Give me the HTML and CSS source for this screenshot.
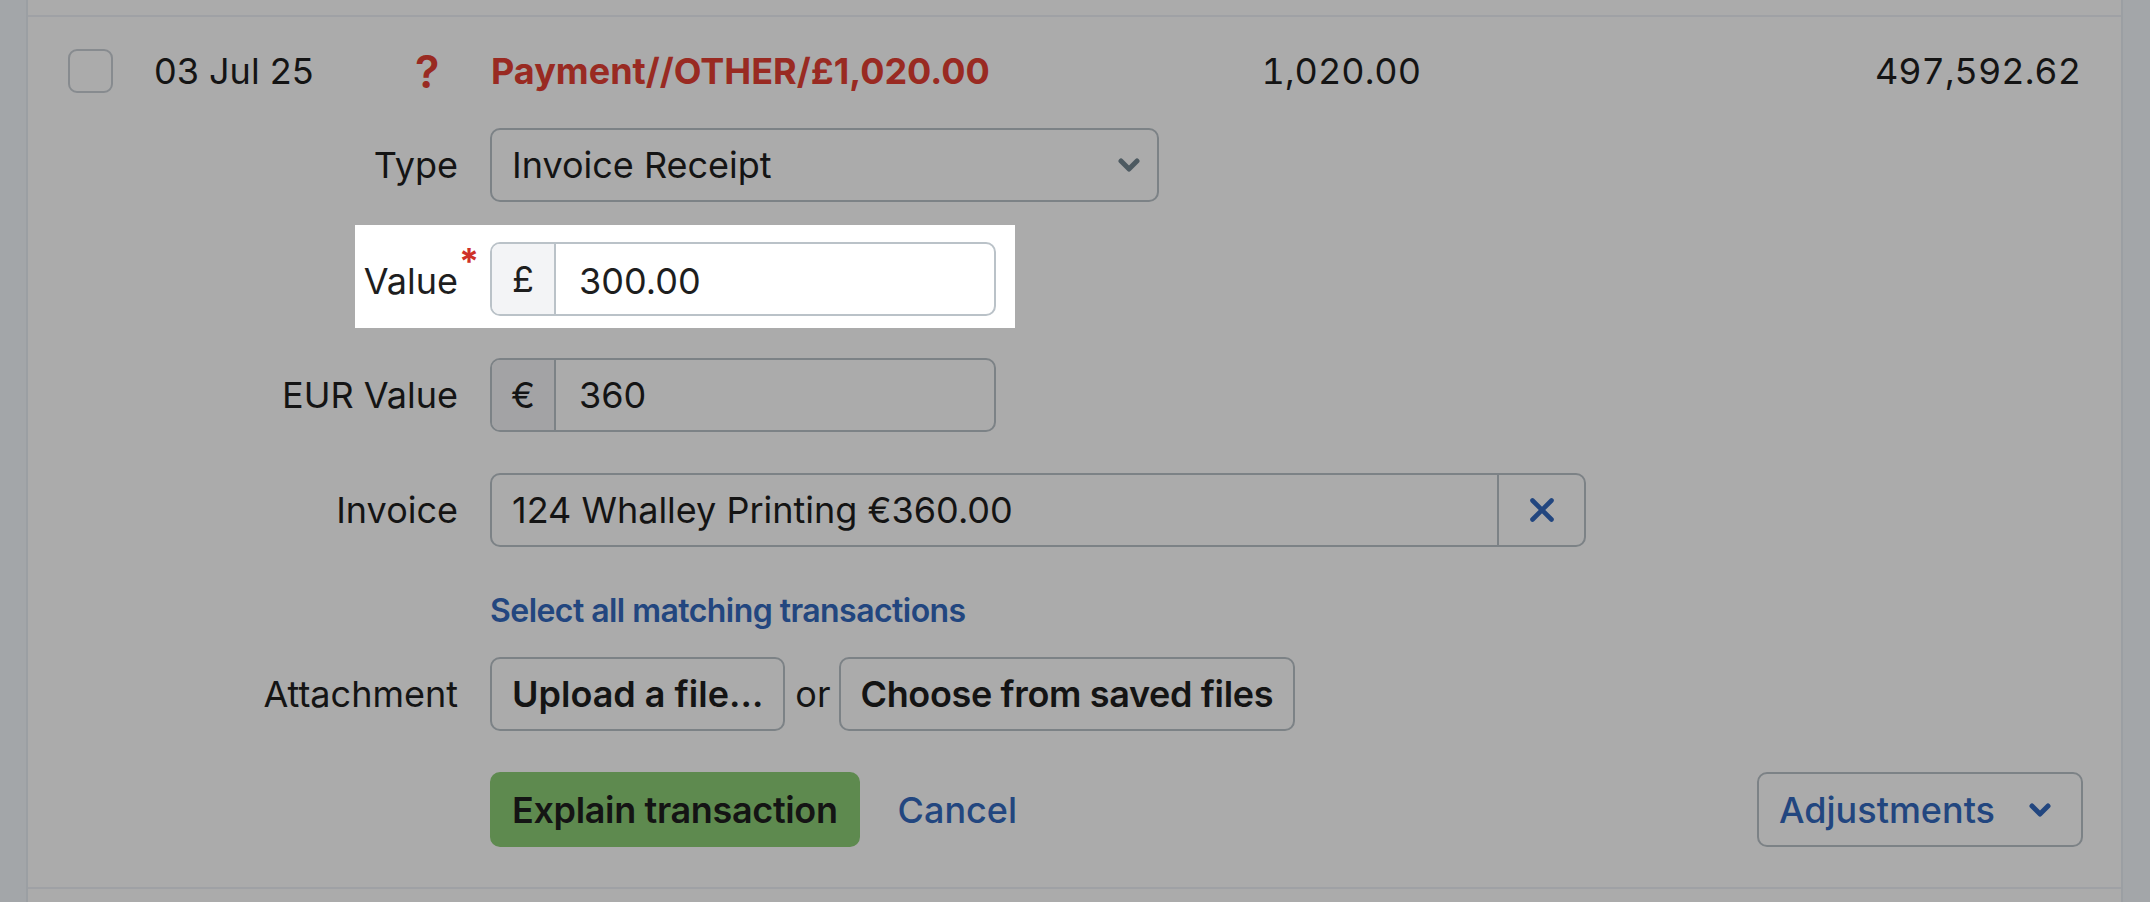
FILE: index.html
```html
<!DOCTYPE html>
<html lang="en">
<head>
<meta charset="utf-8">
<title>Explain transaction</title>
<link rel="stylesheet" href="styles.css">
</head>
<body>
<div class="card">
  <div class="row-stub"></div>
  <div class="txn">
    <div class="txn-head">
      <div class="cell"><span class="checkbox"></span></div>
      <div class="cell date">03 Jul 25</div>
      <div class="cell unknown">?</div>
      <div class="cell desc">Payment//OTHER/£1,020.00</div>
      <div class="cell num">1,020.00</div>
      <div class="cell num">497,592.62</div>
    </div>

    <div class="explain">
      <div class="frow first">
        <label class="flabel">Type</label>
        <div class="select">
          <span>Invoice Receipt</span>
          <svg class="chev" viewBox="0 0 22 14" width="22" height="14"><path d="M3 3l8 8 8-8" fill="none" stroke-width="5" stroke-linecap="round" stroke-linejoin="round"/></svg>
        </div>
      </div>

      <div class="frow spot r-value">
        <label class="flabel"><span class="req-wrap">Value<span class="req">*</span></span></label>
        <div class="igroup">
          <span class="addon">£</span>
          <span class="ival">300.00</span>
        </div>
      </div>

      <div class="frow r-eur">
        <label class="flabel">EUR Value</label>
        <div class="igroup">
          <span class="addon">€</span>
          <span class="ival">360</span>
        </div>
      </div>

      <div class="frow r-inv">
        <label class="flabel">Invoice</label>
        <div class="igroup wide">
          <span class="ival grow">124 Whalley Printing €360.00</span>
          <span class="clear">
            <svg viewBox="0 0 26 26" width="26" height="26"><path d="M3.5 3.5l19 19M22.5 3.5l-19 19" fill="none" stroke-width="4.6" stroke-linecap="round"/></svg>
          </span>
        </div>
      </div>

      <div class="frow r-link">
        <span class="flabel"></span>
        <a class="link">Select all matching transactions</a>
      </div>

      <div class="frow r-attach">
        <label class="flabel">Attachment</label>
        <div class="attach">
          <span class="btn upload">Upload a file…</span>
          <span class="or">or</span>
          <span class="btn">Choose from saved files</span>
        </div>
      </div>

      <div class="frow r-actions">
        <span class="flabel"></span>
        <div class="actions">
          <span class="btn primary">Explain transaction</span>
          <a class="cancel">Cancel</a>
          <span class="btn adjust">Adjustments
            <svg class="chev blue" viewBox="0 0 22 14" width="22" height="14"><path d="M3 3l8 8 8-8" fill="none" stroke-width="5" stroke-linecap="round" stroke-linejoin="round"/></svg>
          </span>
        </div>
      </div>
    </div>
  </div>
  <div class="row-stub"></div>
</div>
</body>
</html>
```

FILE: styles.css
```css
html, body {
  margin: 0;
  padding: 0;
  height: 902px;
  overflow: hidden;
}

body {
  background: #f4f8fd;
  font-family: Inter, "Noto Sans", sans-serif;
  font-size: 36px;
  color: #1e1e1e;
}

.card {
  margin: 0 27px 0 26px;
  background: #ffffff;
  border-left: 2px solid #e8eef4;
  border-right: 2px solid #e8eef4;
}

.row-stub {
  height: 15px;
}

.row-stub:last-child {
  height: 13px;
}

.txn {
  border-top: 2px solid #edf1f6;
  border-bottom: 2px solid #edf1f6;
  padding-bottom: 40px;
}

.txn-head {
  display: grid;
  grid-template-columns: 86px 261px 76px 1fr 200px 660px;
  align-items: center;
  padding: 31px 40px 0 40px;
  height: 44px;
}

.cell {
  white-space: nowrap;
}

.checkbox {
  display: block;
  width: 41px;
  height: 40px;
  border: 2px solid #cad0d6;
  border-radius: 9px;
  background: #fff;
}

.unknown {
  color: #e53f33;
  font-size: 45px;
  font-weight: 600;
  line-height: 44px;
  margin-top: 2px;
}

.desc {
  color: #e53f33;
  font-weight: 700;
}

.num {
  text-align: right;
  font-variant-numeric: tabular-nums;
}

.explain {
  display: flex;
  flex-direction: column;
  margin-top: 36px;
}

.frow {
  display: flex;
  align-items: center;
  gap: 32px;
  height: 74px;
}

.r-value { margin-top: 40px; }
.r-eur { margin-top: 42px; }
.r-inv { margin-top: 41px; }
.r-link { margin-top: 34px; height: 60px; }
.r-attach { margin-top: 16px; }
.r-actions { margin-top: 41px; height: 75px; }

.flabel {
  flex: 0 0 430px;
  text-align: right;
  white-space: nowrap;
}

.spot {
  position: relative;
}

.spot::after {
  content: "";
  position: absolute;
  left: 327px;
  top: -17px;
  width: 660px;
  height: 103px;
  box-shadow: 0 0 0 4000px rgba(0, 0, 0, 0.33);
  pointer-events: none;
  z-index: 10;
}

.r-value .flabel,
.r-value .ival {
  padding-top: 3px;
}

.req-wrap {
  position: relative;
}

.req {
  position: absolute;
  left: 100%;
  top: -20px;
  padding-left: 1px;
  color: #cf3128;
  font-weight: 700;
}

.select {
  box-sizing: border-box;
  width: 669px;
  height: 74px;
  border: 2px solid #bac2c8;
  border-radius: 10px;
  background: #fff;
  display: flex;
  align-items: center;
  justify-content: space-between;
  padding: 0 17px 0 20px;
}

.chev path {
  stroke: #748691;
}

.chev.blue path {
  stroke: #3369be;
}

.igroup {
  box-sizing: border-box;
  width: 506px;
  height: 74px;
  border: 2px solid #bac2c8;
  border-radius: 10px;
  background: #fff;
  display: flex;
  align-items: stretch;
  overflow: hidden;
}

.igroup.wide {
  width: 1096px;
}

.addon {
  width: 62px;
  border-right: 2px solid #bac2c8;
  background: #f3f4f6;
  display: flex;
  align-items: center;
  justify-content: center;
}

.ival {
  display: flex;
  align-items: center;
  padding-left: 23px;
}

.ival.grow {
  flex: 1;
  padding-left: 20px;
}

.clear {
  width: 85px;
  border-left: 2px solid #bac2c8;
  display: flex;
  align-items: center;
  justify-content: center;
}

.clear path {
  stroke: #3369be;
}

.link {
  color: #3369be;
  font-size: 32px;
  font-weight: 600;
  letter-spacing: -0.55px;
  line-height: 60px;
}

.attach {
  display: flex;
  align-items: center;
}

.btn {
  box-sizing: border-box;
  height: 74px;
  border: 2px solid #bac2c8;
  border-radius: 10px;
  background: #fff;
  padding: 0 20px;
  display: inline-flex;
  align-items: center;
  font-weight: 600;
  letter-spacing: -0.35px;
  white-space: nowrap;
}

.btn.upload {
  letter-spacing: 0;
}

.or {
  padding: 0 8px 0 10px;
}

.actions {
  flex: 1;
  display: flex;
  align-items: center;
  margin-right: 38px;
}

.btn.primary {
  height: 75px;
  background: #8dce77;
  border-color: #8dce77;
}

.cancel {
  color: #3369be;
  font-weight: 500;
  margin-left: 38px;
}

.btn.adjust {
  margin-left: auto;
  height: 75px;
  color: #3369be;
  font-weight: 500;
  letter-spacing: 0;
  gap: 34px;
  padding-right: 30px;
}
```
